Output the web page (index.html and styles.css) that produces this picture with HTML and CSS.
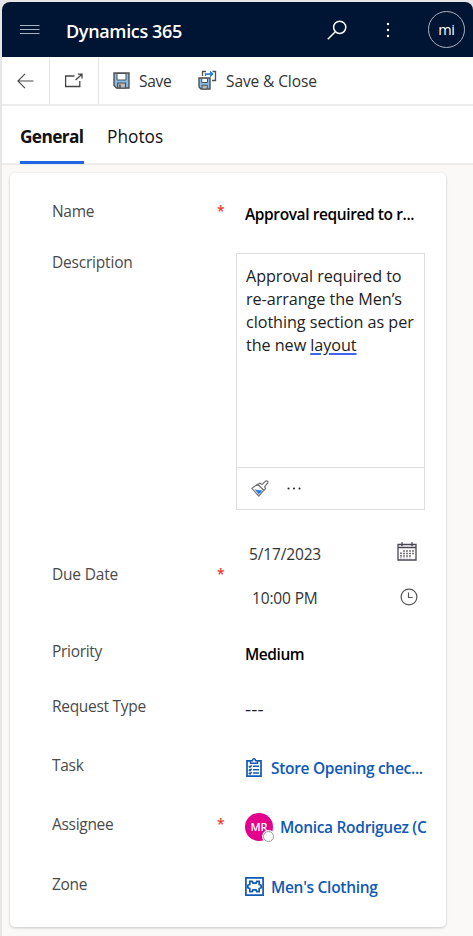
FILE: index.html
```html
<!DOCTYPE html>
<html lang="en">
<head>
<meta charset="utf-8">
<title>Dynamics 365</title>
<link rel="stylesheet" href="styles.css">
</head>
<body>
<div class="app">
  <header class="topbar">
    <svg class="menu" width="20" height="12" viewBox="0 0 20 12" fill="none" stroke="#a9b1c1" stroke-width="1"><path d="M0 1.500h19.500M0 5.500h19.500M0 9.500h19.500"/></svg>
    <h1 class="brand">Dynamics 365</h1>
    <svg class="search" width="20" height="20" viewBox="0 0 20 20" fill="none" stroke="#fff" stroke-width="1.500"><circle cx="12.700" cy="7.300" r="6.100"/><path d="M8.300 11.700 .8 19.200"/></svg>
    <svg class="more" width="4" height="16" viewBox="0 0 4 16" fill="#fff"><circle cx="2" cy="2" r="1.200"/><circle cx="2" cy="8" r="1.200"/><circle cx="2" cy="14" r="1.200"/></svg>
    <span class="user">mi</span>
  </header>

  <div class="commands">
    <button class="cmd back"><svg width="17" height="16" viewBox="0 0 17 16" fill="none" stroke="#4a4a4a" stroke-width="1.100"><path d="M.8 8H16.500M8 .9.900 8 8 15.100"/></svg></button>
    <button class="cmd open"><svg width="20" height="15" viewBox="0 0 20 15" fill="none" stroke="#444" stroke-width="1.300"><path d="M10.500 3H1.600v10.500h14.200V8M11.500 7 18 1.200M13.800 1.200H18v4.300"/></svg></button>
    <button class="cmd save"><svg width="17" height="17" viewBox="0 0 17 17"><path d="M1 1h15v15H3.500L1 13.500z" fill="#83bdea" stroke="#505050" stroke-width="1.400"/><path d="M4 1.500h9V8H4z" fill="#fff" stroke="#505050"/><path d="M4.700 11h7.800v5H4.700z" fill="#bbb" stroke="#505050" stroke-width="1.200"/><path d="M7 12.500v3.500" stroke="#505050" stroke-width="1.500"/></svg><span>Save</span></button>
    <button class="cmd close"><svg width="19" height="20" viewBox="0 0 19 20" fill="none"><path d="M1 8h11v11H3l-2-2z" fill="#83bdea" stroke="#505050" stroke-width="1.400"/><path d="M3.700 8.300h5.800v4.200H3.700z" fill="#fff" stroke="#505050"/><path d="M4 15.200h5.300V19H4z" fill="#bbb" stroke="#505050"/><path d="M4.500 6V1.500H8M14.500 1.500h3v9H14" stroke="#505050" stroke-width="1.300"/><path d="M7.500 6V4h7M12 1.500 14.600 4 12 6.500" stroke="#1673cf" stroke-width="1.300"/></svg><span>Save &amp; Close</span></button>
  </div>

  <nav class="tabs">
    <a class="tab active">General</a>
    <a class="tab photos">Photos</a>
  </nav>

  <main class="card">
    <div class="row name"><span class="label">Name</span><span class="req">*</span><span class="value strong title">Approval required to r...</span></div>
    <div class="row desc"><span class="label wide">Description</span><span class="req"></span>
      <div class="editor">
        <p>Approval required to<br>re-arrange the Men’s<br>clothing section as per<br>the new <u>layout</u></p>
        <div class="tools">
          <svg width="18" height="17" viewBox="0 0 18 17" fill="none" stroke="#777" stroke-width="1.200" stroke-linejoin="round"><path d="M6.500 4.200 13 10.200 7.800 16 .8 8.400z" fill="#fff"/><path d="m3.500 9.200 3 .8 5 .5-3.700 3.700z" fill="#1f7be0" stroke="none"/><path d="M7 4.700 8.800 3l2.200 1.500 3.700-3.500c1.600-.7 2.900.7 2 2L13.500 6.800l1.200 1.700-1.800 1.600z" fill="#fff"/></svg>
          <svg width="14" height="3" viewBox="0 0 14 3" fill="#222"><circle cx="1.500" cy="1.500" r="1"/><circle cx="7" cy="1.500" r="1"/><circle cx="12.500" cy="1.500" r="1"/></svg>
        </div>
      </div>
    </div>
    <div class="row due"><span class="label wide">Due Date</span><span class="req">*</span>
      <div class="when">
        <div class="date"><span>5/17/2023</span><svg width="20" height="19" viewBox="0 0 20 19" fill="none" stroke="#4b4655"><path d="M1 2.500h18v15.500H1zM1 5.500h18" stroke-width="1.300"/><path d="M5 .3v4M15 .3v4" stroke-width="1.400"/><path d="M7 8.200v8M10 8.200v8M13 8.200v8M16 8.200v5M4 10.500v5.700" stroke-dasharray="1.500 1" stroke-width="1.500"/></svg></div>
        <div class="time"><span>10:00 PM</span><svg width="18" height="18" viewBox="0 0 18 18" fill="none" stroke="#555" stroke-width="1.200"><circle cx="9" cy="9" r="7.900"/><path d="M8.500 4.500v5h4.200"/></svg></div>
      </div>
    </div>
    <div class="row priority"><span class="label">Priority</span><span class="req"></span><span class="value strong medium">Medium</span></div>
    <div class="row type"><span class="label">Request Type</span><span class="req"></span><span class="value none">---</span></div>
    <div class="row task"><span class="label">Task</span><span class="req"></span>
      <a class="value link"><svg width="18" height="19" viewBox="-1 0 18 19" fill="none" stroke="#1059b5" stroke-width="1.700"><path d="M4.500 2.800H1v15.400h14V2.800h-3.500"/><path d="M4.500 5.300V2.800h2C6.500 0 9.500 0 9.500 2.800h2v2.500z" stroke-width="1.400"/><path d="M7 8.300h6M7 11.700h6M7 15h6M2.800 8.200l1.200 1 1.700-1.900M2.800 11.600l1.200 1 1.700-1.900M2.800 14.900l1.200 1 1.700-1.900" stroke-width="1.500"/></svg><span>Store Opening chec...</span></a></div>
    <div class="row assignee"><span class="label">Assignee</span><span class="req">*</span>
      <a class="value link person"><span class="avatar">MR<i class="presence"></i></span><span>Monica Rodriguez (C</span></a></div>
    <div class="row zone"><span class="label">Zone</span><span class="req"></span>
      <a class="value link"><svg width="19" height="19" viewBox="0 0 19 19" fill="none" stroke="#1059b5" stroke-width="1.700"><path d="M.9.9h17.200v17.200H.9z"/><path d="M4.800 4.300h2.400L8 6.200h3l.8-1.900h2.400v3.200l2 .8v2.400l-2 .8v3.200h-2.400l-.8-1.900H8l-.8 1.900H4.800v-3.200l-2-.8V8.300l2-.8z" stroke-width="1.700"/></svg><span>Men's Clothing</span></a></div>
  </main>
</div>
</body>
</html>
```
FILE: styles.css
```css
* { box-sizing: border-box; }
body {
  margin: 0;
  width: 473px;
  height: 936px;
  overflow: hidden;
  padding: 2px 0 0 2px;
  background: #e6e6e6;
  font-family: "Open Sans", "Noto Sans", sans-serif;
  font-size: 15.5px;
  line-height: 24px;
  letter-spacing: -0.3px;
  color: #333;
  white-space: nowrap;
}
svg { display: block; flex: none; }
.app { height: 934px; background: #faf9f8; border-radius: 8px 8px 0 0; overflow: hidden; }

.topbar { height: 55px; background: #001433; display: flex; align-items: center; color: #fff; }
.menu { margin-left: 18px; }
.brand { margin: 2px 0 0 26px; width: 235px; font-size: 18px; font-weight: 600; letter-spacing: -0.35px; }
.search { margin-left: 26px; }
.more { margin-left: 39px; }
.user { width: 37px; height: 37px; margin-left: 38px; border: 1px solid #a9b1c1; border-radius: 50%; line-height: 36px; text-align: center; font-size: 14.5px; }

.commands { height: 49px; background: #fff; border-bottom: 2px solid #ececec; display: flex; }
.cmd { display: flex; align-items: center; border: 0; padding: 0; background: none; font: inherit; letter-spacing: inherit; color: #333; }
.back { width: 48px; border-right: 1px solid #e4e4e4; padding-left: 15px; }
.open { width: 49px; border-right: 1px solid #e4e4e4; padding-left: 14px; }
.save { padding-left: 14px; gap: 9px; width: 99px; }
.close { gap: 9px; letter-spacing: -0.1px; }
.close svg { margin-top: -1px; }

.tabs { height: 59px; background: #fff; border-bottom: 2px solid #ececec; display: flex; padding-left: 18px; font-size: 17.3px; color: #111; }
.tab { height: 58px; padding-top: 19px; }
.active { width: 64px; font-weight: 700; border-bottom: 3px solid #2266e3; letter-spacing: -0.65px; }
.photos { margin-left: 23px; letter-spacing: 0; }

.card { margin: 8px 0 0 8px; width: 436px; height: 754px; padding: 26px 0 0 42px; background: #fff; border-radius: 5px; box-shadow: 0 1px 3px rgba(0,0,0,.2); }
.row { display: grid; grid-template-columns: 165px 19px 191px; align-items: start; }
.label { color: #4a4a4a; }
.wide { letter-spacing: -0.2px; }
.req { color: #f2382b; font-size: 14px; font-weight: 600; }
.value { padding: 3px 0 0 9px; color: #222; overflow: hidden; }
.strong { font-weight: 600; color: #000; }
.title { letter-spacing: -0.4px; }
.medium { letter-spacing: -0.45px; }
.none { font-size: 19px; letter-spacing: 0.1px; }
.name { height: 51px; }
.desc { height: 312px; }
.due { height: 77px; }
.priority { height: 55px; }
.type { height: 59px; }
.task { height: 59px; }
.assignee { height: 60px; }

.editor { width: 189px; height: 257px; margin-top: 3px; border: 1px solid #dedede; display: flex; flex-direction: column; }
.editor p { flex: 1; margin: 0; padding: 11px 0 0 9px; font-size: 16.2px; line-height: 23px; letter-spacing: -0.06px; color: #222; }
.editor u { text-decoration-color: #4167ef; text-decoration-thickness: 1.5px; text-underline-offset: 2px; }
.tools { height: 42px; border-top: 1px solid #dedede; display: flex; align-items: center; gap: 18px; padding: 0 0 1px 14px; }

.when { margin-top: -20px; }
.date, .time { height: 44px; display: flex; align-items: flex-start; justify-content: space-between; letter-spacing: -0.15px; }
.date { padding: 0 10px 0 13px; }
.time { padding: 0 9px 0 16px; }
.time svg { margin-top: 2px; }

.link { display: flex; align-items: center; gap: 7px; color: #1059b5; font-weight: 600; }
.link svg { margin-top: -2px; }
.task .link { gap: 8px; }
.person { overflow: clip; padding-bottom: 2px; margin-top: -2px; }
.avatar { position: relative; flex: none; width: 28px; height: 28px; border-radius: 50%; background: #e3008c; color: #fff; font-size: 11px; line-height: 28px; text-align: center; letter-spacing: 0; }
.presence { position: absolute; right: -1px; bottom: -1px; width: 11px; height: 11px; border: 1px solid #999; border-radius: 50%; background: #fff; box-shadow: 0 0 0 1px #fff; }
```
